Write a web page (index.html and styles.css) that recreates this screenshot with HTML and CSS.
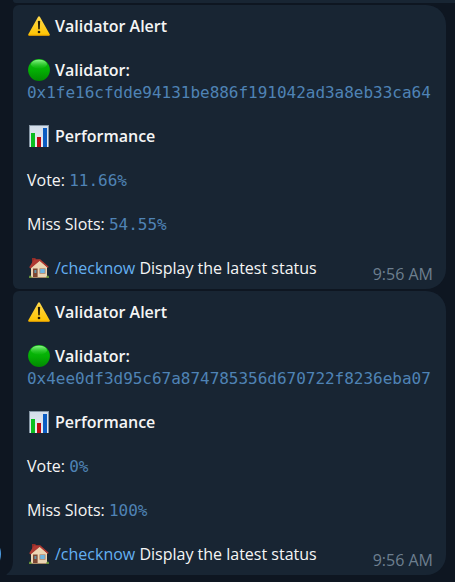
FILE: index.html
```
<!DOCTYPE html>
<html lang="en">
<head>
    <meta charset="UTF-8">
    <meta name="viewport" content="width=device-width, initial-scale=1.0">
    <title>Validator Alerts</title>
    <link rel="stylesheet" href="styles.css">
</head>
<body>
    <!-- shared icon shapes -->
    <svg class="defs" width="0" height="0">
        <defs>
            <linearGradient id="gYellow" x1="0" y1="0" x2="0" y2="1">
                <stop offset="0" stop-color="#ffd94d"/>
                <stop offset="1" stop-color="#fec400"/>
            </linearGradient>
            <linearGradient id="gGreen" x1="0" y1="0" x2="0" y2="1">
                <stop offset="0" stop-color="#0fbd10"/>
                <stop offset="0.5" stop-color="#04b004"/>
                <stop offset="1" stop-color="#028a02"/>
            </linearGradient>
            <linearGradient id="gShine" x1="0" y1="0" x2="0" y2="1">
                <stop offset="0" stop-color="#8df58a"/>
                <stop offset="1" stop-color="#1fc41f" stop-opacity="0.2"/>
            </linearGradient>
            <linearGradient id="gPaper" x1="0" y1="0" x2="0" y2="1">
                <stop offset="0" stop-color="#d3dde9"/>
                <stop offset="1" stop-color="#e9eef3"/>
            </linearGradient>
        </defs>
        <symbol id="warning" viewBox="0 0 22 22">
            <path d="M11 1.3 Q11.6 1.3 12 2.1 L21.7 19.2 Q22 20.4 20.9 20.6 H1.1 Q0 20.4 .3 19.2 L10 2.1 Q10.4 1.3 11 1.3Z" fill="url(#gYellow)"/>
            <path d="M.3 19.3 Q.1 20.5 1.1 20.7 H20.9 Q21.9 20.5 21.7 19.3 L21 19.8 H1Z" fill="#e69d00"/>
            <path d="M9.9 6.6 Q9.9 5.7 11 5.7 Q12.1 5.7 12.1 6.6 L11.8 13.8 Q11.7 14.5 11 14.5 Q10.3 14.5 10.2 13.8Z" fill="#231c08"/>
            <circle cx="11" cy="17" r="1.3" fill="#231c08"/>
        </symbol>
        <symbol id="green" viewBox="0 0 22 22">
            <circle cx="11" cy="11" r="10.9" fill="url(#gGreen)"/>
            <ellipse cx="11" cy="5.2" rx="8" ry="4.4" fill="url(#gShine)"/>
        </symbol>
        <symbol id="chart" viewBox="0 0 22 22">
            <rect x="1" y="0" width="20" height="22" fill="#8696a5"/>
            <rect x="2" y="1" width="18" height="21" fill="url(#gPaper)"/>
            <rect x="3" y="8" width="4" height="14" fill="#0bbd20"/>
            <rect x="9" y="12" width="4" height="10" fill="#bd0a13"/>
            <rect x="15" y="3" width="4" height="19" fill="#0b5cc2"/>
        </symbol>
        <symbol id="house" viewBox="0 0 22 22">
            <rect x="4" y="1" width="3.6" height="5" fill="#8f2c28"/>
            <path d="M3 10.5 L11.6 3 L19 9.8 V20.6 H3Z" fill="#ecd5b4"/>
            <path d="M1.2 10.2 L5.4 3.4 Q5.8 2.2 7 2.2 H12.2 L20.7 9.8 L19.7 11 L11.6 4 L2.6 11.4Z" fill="#b03932"/>
            <path d="M10.8 5.4 L11.8 4.6 L18.8 10.6 V12 H4 V11Z" fill="#ecd5b4"/>
            <rect x="5" y="11.5" width="4.6" height="8.8" fill="#7d4733"/>
            <rect x="6.4" y="13" width="2" height="3" fill="#6692a7"/>
            <rect x="11.5" y="11.4" width="6" height="5.3" fill="#a77b62"/>
            <rect x="12.2" y="12" width="4.6" height="4" fill="#70b6e2"/>
            <rect x="3" y="20" width="16" height="1" fill="#a98a69"/>
            <path d="M1 20.9 Q.8 18.6 2 18.6 Q3.4 18.4 3.8 20.9Z M18.2 20.9 Q18.4 18.2 20 18.5 Q21.4 18.8 21 20.9Z" fill="#69963a"/>
        </symbol>
    </svg>

    <div class="chat">
        <div class="message previous"></div>

        <div class="message">
            <p><svg class="icon"><use href="#warning"/></svg><strong>Validator Alert</strong></p>
            <p><svg class="icon"><use href="#green"/></svg><strong>Validator:</strong><br>
            <code>0x1fe16cfdde94131be886f191042ad3a8eb33ca64</code></p>
            <p><svg class="icon"><use href="#chart"/></svg><strong>Performance</strong></p>
            <p>Vote: <code>11.66%</code></p>
            <p>Miss Slots: <code>54.55%</code></p>
            <p><svg class="icon"><use href="#house"/></svg><span class="command">/checknow</span> Display the latest status</p>
            <span class="time">9:56 AM</span>
        </div>

        <div class="message last">
            <p><svg class="icon"><use href="#warning"/></svg><strong>Validator Alert</strong></p>
            <p><svg class="icon"><use href="#green"/></svg><strong>Validator:</strong><br>
            <code>0x4ee0df3d95c67a874785356d670722f8236eba07</code></p>
            <p><svg class="icon"><use href="#chart"/></svg><strong>Performance</strong></p>
            <p>Vote: <code>0%</code></p>
            <p>Miss Slots: <code>100%</code></p>
            <p><svg class="icon"><use href="#house"/></svg><span class="command">/checknow</span> Display the latest status</p>
            <span class="time">9:56 AM</span>
            <svg class="tail" viewBox="0 0 8 18"><path d="M8 0 V18 H1 Q0 18 .6 17.2 Q7 13 7 4 V0Z"/></svg>
            <span class="avatar"></span>
        </div>
    </div>
</body>
</html>
```

FILE: styles.css
```
body {
    margin: 0;
    background: #0e1621;
    color: #f5f5f5;
    font-family: "Open Sans", "Noto Sans", sans-serif;
    font-size: 16px;
    line-height: 22px;
    overflow: hidden;
}
.defs {
    position: absolute;
}
.chat {
    display: flex;
    flex-direction: column;
    gap: 2px;
    height: 582px;
    padding: 0 9px 0 13px;
}
.message {
    position: relative;
    box-sizing: border-box;
    width: 433px;
    height: 284px;
    padding: 10px 14px;
    background: #182533;
    border-radius: 6px 20px 20px 6px;
}
.previous {
    width: 460px;
    height: 3px;
    padding: 0;
    border-radius: 0 0 0 6px;
}
.last {
    border-bottom-left-radius: 0;
}
p {
    margin: 0 0 22px;
    white-space: nowrap;
}
strong {
    font-weight: 600;
}
code {
    color: #4f83b5;
    font-family: "DejaVu Sans Mono", monospace;
    font-size: 16px;
    line-height: 1;
    letter-spacing: -0.02px;
}
.icon {
    width: 22px;
    height: 22px;
    margin: 0 5px 0 1px;
    vertical-align: top;
}
.command {
    color: #64b0f2;
}
.time {
    position: absolute;
    right: 13px;
    bottom: 4px;
    color: #6d7f8f;
}
.tail {
    position: absolute;
    left: -7px;
    bottom: 0;
    width: 8px;
    height: 18px;
    fill: #182533;
}
.avatar {
    position: absolute;
    left: -55px;
    bottom: 0;
    width: 43px;
    height: 42px;
    border-radius: 50%;
    background: #4c9be0;
}
```
